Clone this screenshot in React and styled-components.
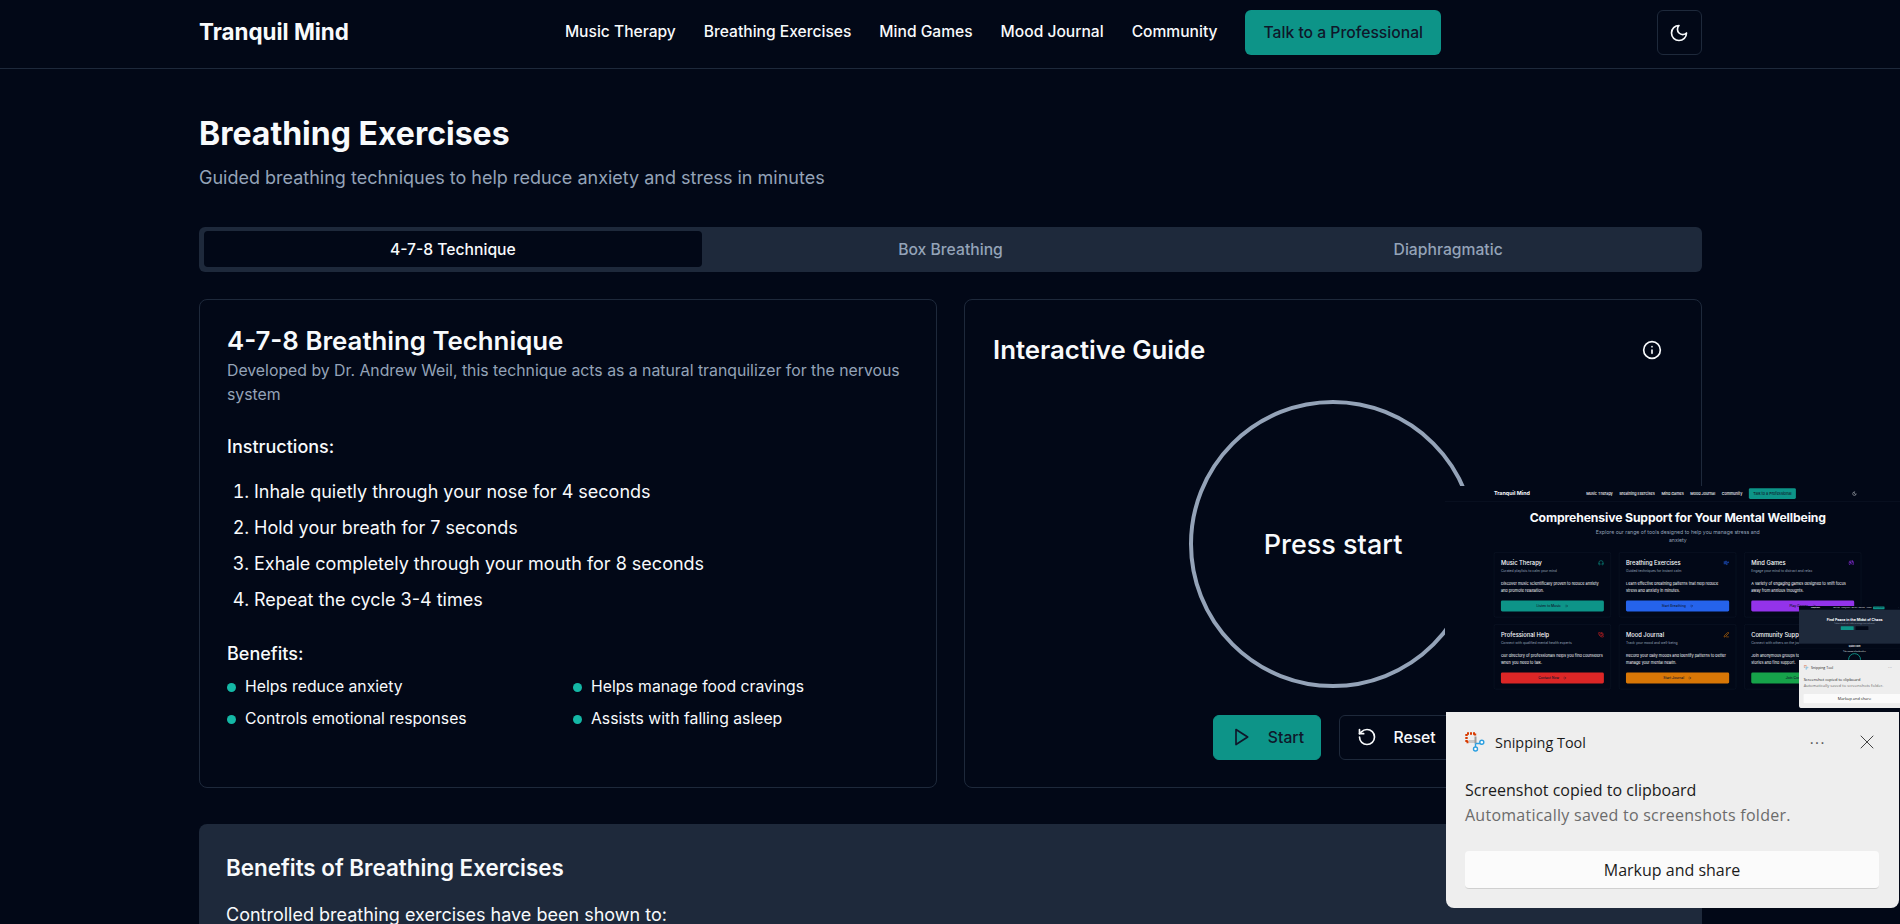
import React from "react";
import styled, { createGlobalStyle } from "styled-components";
import {
  ArrowRight,
  Gamepad2,
  Headphones,
  Info,
  PenLine,
  PhoneCall,
  RotateCcw,
  Users,
  Wind,
  X,
} from "lucide-react";

const GlobalStyle = createGlobalStyle`
  * { box-sizing: border-box; }
  html, body { margin: 0; padding: 0; height: 100%; overflow: hidden; background: #020817; }
  body { font-family: Inter, "Liberation Sans", sans-serif; color: #f8fafc; }
  h1, h2, h3, p, ol, ul { margin: 0; padding: 0; }
`;

const Screen = styled.div`
  position: relative;
  height: 924px;
  overflow: hidden;
  background: #020817;
`;

const Container = styled.div`
  width: 1503px;
  margin-left: 199px;
`;

const HeaderBar = styled.header`
  height: 69px;
  border-bottom: 1px solid #1e293b;
`;

const HeaderRow = styled(Container)`
  height: 68px;
  display: flex;
  align-items: center;
  justify-content: space-between;
  padding-bottom: 3px;
`;

const Logo = styled.div`
  padding-bottom: 2px;
  font-size: 22.4px;
  font-weight: 700;
  line-height: 32px;
`;

const Nav = styled.nav`
  display: flex;
  align-items: center;
  gap: 28px;
  font-size: 15.6px;
  font-weight: 500;
`;

const NavLink = styled.span`
  padding-bottom: 2px;
`;

const CtaButton = styled.button`
  height: 45px;
  padding: 0 18px;
  border: 0;
  border-radius: 6px;
  background: #0d9488;
  color: #0f172a;
  font: 500 15.7px Inter, sans-serif;
`;

const IconButton = styled.button`
  width: 45px;
  height: 45px;
  display: flex;
  align-items: center;
  justify-content: center;
  border: 1px solid #1e293b;
  border-radius: 6px;
  background: #020817;
  color: #f8fafc;
`;

const PageTitle = styled.h1`
  padding-top: 45px;
  font-size: 32px;
  font-weight: 700;
  line-height: 40px;
`;

const PageSub = styled.p`
  margin-top: 10px;
  font-size: 18px;
  line-height: 28px;
  color: #94a3b8;
`;

const TabBar = styled.div`
  margin-top: 35px;
  height: 45px;
  padding: 4px 5px;
  display: grid;
  grid-template-columns: repeat(3, 1fr);
  border-radius: 6px;
  background: #1e293b;
`;

const Tab = styled.div`
  height: 36px;
  display: flex;
  align-items: center;
  justify-content: center;
  border-radius: 4px;
  font-size: 15.7px;
  font-weight: 500;
  background: ${(p) => (p.$active ? "#020817" : "transparent")};
  color: ${(p) => (p.$active ? "#f8fafc" : "#94a3b8")};
`;

const CardGrid = styled.div`
  margin-top: 27px;
  display: grid;
  grid-template-columns: 1fr 1fr;
  gap: 27px;
`;

const Card = styled.section`
  border: 1px solid #1e293b;
  border-radius: 8px;
`;

const TechniqueCard = styled(Card)`
  padding: 24px 27px 0;
`;

const CardTitle = styled.h2`
  font-size: 25.8px;
  font-weight: 600;
  line-height: 34px;
`;

const CardSub = styled.p`
  margin-top: 1px;
  font-size: 15.8px;
  line-height: 24px;
  color: #94a3b8;
`;

const Label = styled.h3`
  margin-top: ${(p) => p.$top}px;
  font-size: 18px;
  font-weight: 500;
  line-height: 28px;
`;

const Steps = styled.ol`
  margin-top: 17px;
  display: flex;
  flex-direction: column;
  gap: 8px;
  padding-left: 27px;
  font-size: 18px;
  line-height: 28px;
`;

const BenefitGrid = styled.ul`
  margin-top: 7px;
  display: grid;
  grid-template-columns: 1fr 1fr;
  gap: 8px 10px;
  list-style: none;
`;

const BenefitItem = styled.li`
  display: flex;
  align-items: center;
  gap: 9px;
  font-size: 15.75px;
  line-height: 24px;
  &::before {
    content: "";
    width: 9px;
    height: 9px;
    border-radius: 50%;
    background: #14b8a6;
  }
`;

const GuideCard = styled(Card)`
  padding: 33px 28px 27px;
  display: flex;
  flex-direction: column;
`;

const GuideHead = styled.div`
  display: flex;
  align-items: center;
  justify-content: space-between;
  padding-right: 11px;
`;

const BreathCircle = styled.div`
  align-self: center;
  margin-top: 33px;
  width: 288px;
  height: 288px;
  display: flex;
  align-items: center;
  justify-content: center;
  border: 4px solid #94a3b8;
  border-radius: 50%;
  font-size: 27px;
  font-weight: 500;
`;

const GuideActions = styled.div`
  margin-top: 27px;
  display: flex;
  justify-content: center;
  gap: 18px;
`;

const ActionButton = styled.button`
  height: 45px;
  padding: 0 16px 1px 17px;
  display: flex;
  align-items: center;
  gap: 16.5px;
  border: 1px solid ${(p) => (p.$primary ? "#0d9488" : "#1e293b")};
  border-radius: 6px;
  background: ${(p) => (p.$primary ? "#0d9488" : "#020817")};
  color: ${(p) => (p.$primary ? "#0f172a" : "#f8fafc")};
  font: 500 15.7px Inter, sans-serif;
`;

const InfoPanel = styled.section`
  margin-top: 36px;
  padding: 28px 27px 40px;
  border-radius: 8px;
  background: #1e293b;
`;

const InfoTitle = styled.h2`
  font-size: 22.4px;
  font-weight: 600;
  line-height: 32px;
`;

const InfoText = styled.p`
  margin-top: 17px;
  font-size: 18px;
  line-height: 28px;
`;

/* screenshot previews that windows leaves stacked in the corner */
const PreviewFrame = styled.div`
  position: absolute;
  left: 1445px;
  top: 486px;
  width: 456px;
  height: 226px;
  overflow: hidden;
  background: #020817;
`;

const Scaled = styled.div`
  width: 1900px;
  transform: scale(${(p) => p.$scale});
  transform-origin: top left;
`;

const HomeNav = styled.div`
  height: 64px;
  padding: 0 184px 0 204px;
  display: flex;
  align-items: center;
  justify-content: space-between;
  border-bottom: 1px solid #1e293b;
`;

const HomeLinks = styled.div`
  display: flex;
  align-items: center;
  gap: 27.5px;
  font-size: 15.6px;
  font-weight: 500;
`;

const HomeHero = styled.div`
  padding: 36px 0 0 40px;
  text-align: center;
`;

const HomeTitle = styled.h1`
  font-size: 50.8px;
  font-weight: 700;
  line-height: 60px;
  letter-spacing: -0.5px;
`;

const HomeSub = styled.p`
  width: 740px;
  margin: 18px auto 0;
  font-size: 21.6px;
  line-height: 33px;
  color: #94a3b8;
`;

const HomeGrid = styled.div`
  width: 1530px;
  margin: 32px 0 0 204px;
  display: grid;
  grid-template-columns: repeat(3, 1fr);
  gap: 29px 34px;
`;

const HomeCard = styled.div`
  height: 271px;
  padding: 27px 28px 0;
  border: 1px solid #1e293b;
  border-radius: 8px;
`;

const HomeCardHead = styled.div`
  display: flex;
  align-items: center;
  justify-content: space-between;
  font-size: 24px;
  font-weight: 500;
  line-height: 32px;
  color: #f8fafc;
  svg { color: ${(p) => p.$color}; }
`;

const HomeCardSub = styled.p`
  margin-top: 6px;
  font-size: 14px;
  line-height: 20px;
  color: #94a3b8;
`;

const HomeCardText = styled.p`
  margin-top: 33px;
  font-size: 16px;
  line-height: 27px;
`;

const HomeCardButton = styled.div`
  margin-top: 28px;
  height: 46px;
  display: flex;
  align-items: center;
  justify-content: center;
  gap: 16px;
  border-radius: 6px;
  background: ${(p) => p.$color};
  color: #0f172a;
  font-size: 14px;
  font-weight: 500;
`;

const MiniFrame = styled.div`
  position: absolute;
  left: 1799px;
  top: 606px;
  width: 101px;
  height: 54px;
  overflow: hidden;
  background: #020817;
`;

const MiniHero = styled.div`
  height: 580px;
  padding-top: 130px;
  display: flex;
  flex-direction: column;
  align-items: center;
  background: #1e293b;
  h1 {
    font-size: 60px;
    font-weight: 700;
    line-height: 70px;
  }
  p {
    margin-top: 20px;
    font-size: 24px;
    line-height: 34px;
    color: #94a3b8;
  }
`;

const MiniActions = styled.div`
  margin-top: 30px;
  display: flex;
  gap: 32px;
`;

const MiniButton = styled.div`
  width: 220px;
  height: 64px;
  border-radius: 6px;
  background: ${(p) => p.$color};
`;

const MiniSection = styled.div`
  padding-top: 24px;
  text-align: center;
  h2 {
    padding-bottom: 16px;
    border-bottom: 2px solid #1e293b;
    font-size: 36px;
    font-weight: 600;
  }
  p {
    margin-top: 24px;
    font-size: 24px;
    line-height: 36px;
  }
`;

const MiniRing = styled.div`
  width: 220px;
  height: 220px;
  margin: 16px auto 0;
  border: 16px solid #0d9488;
  border-radius: 50%;
`;

const ToastFrame = styled.div`
  position: absolute;
  left: ${(p) => p.$left}px;
  top: ${(p) => p.$top}px;
  width: ${(p) => p.$width}px;
  height: ${(p) => p.$height}px;
  overflow: hidden;
`;

const ToastScale = styled.div`
  width: 453px;
  transform: scale(${(p) => p.$scale});
  transform-origin: top left;
`;

const ToastBox = styled.div`
  width: 453px;
  height: 196px;
  padding: 20px 20px 0 19px;
  border-radius: 0 0 8px 8px;
  background: #eeeeee;
  font-family: "Open Sans", "Noto Sans", sans-serif;
  color: #1b1b1b;
`;

const ToastHead = styled.div`
  height: 20px;
  margin-bottom: 26px;
  display: flex;
  align-items: center;
  gap: 10px;
  font-size: 14.4px;
  svg { flex: none; }
`;

const ToastDots = styled.span`
  margin-left: auto;
  margin-right: 19px;
  font-size: 15px;
  letter-spacing: 1.5px;
  line-height: 20px;
  color: #555;
`;

const ToastText = styled.p`
  margin-top: ${(p) => (p.$muted ? 1 : 0)}px;
  font-size: 16px;
  line-height: 24px;
  letter-spacing: ${(p) => (p.$muted ? 0.25 : 0)}px;
  color: ${(p) => (p.$muted ? "#6b6b6b" : "#1b1b1b")};
`;

const ToastButton = styled.div`
  margin-top: 24px;
  height: 38px;
  padding-top: 1px;
  display: flex;
  align-items: center;
  justify-content: center;
  border-radius: 4px;
  border-bottom: 1px solid #d0d0d0;
  background: #fbfbfb;
  font-size: 16px;
`;

const steps = [
  "Inhale quietly through your nose for 4 seconds",
  "Hold your breath for 7 seconds",
  "Exhale completely through your mouth for 8 seconds",
  "Repeat the cycle 3-4 times",
];

const benefits = [
  "Helps reduce anxiety",
  "Helps manage food cravings",
  "Controls emotional responses",
  "Assists with falling asleep",
];

const navLinks = ["Music Therapy", "Breathing Exercises", "Mind Games", "Mood Journal", "Community"];

const homeCards = [
  { title: "Music Therapy", icon: Headphones, color: "#0d9488", sub: "Curated playlists to calm your mind", text: "Discover music scientifically proven to reduce anxiety and promote relaxation.", action: "Listen to Music" },
  { title: "Breathing Exercises", icon: Wind, color: "#2563eb", sub: "Guided techniques for instant calm", text: "Learn effective breathing patterns that help reduce stress and anxiety in minutes.", action: "Start Breathing" },
  { title: "Mind Games", icon: Gamepad2, color: "#9333ea", sub: "Engage your mind to distract and relax", text: "A variety of engaging games designed to shift focus away from anxious thoughts.", action: "Play Games" },
  { title: "Professional Help", icon: PhoneCall, color: "#dc2626", sub: "Connect with qualified mental health experts", text: "Our directory of professionals helps you find counselors when you need to talk.", action: "Contact Now" },
  { title: "Mood Journal", icon: PenLine, color: "#d97706", sub: "Track your mood and well-being", text: "Record your daily moods and identify patterns to better manage your mental health.", action: "Start Journal" },
  { title: "Community Support", icon: Users, color: "#16a34a", sub: "Connect with others on the journey", text: "Join anonymous groups to share experiences and stories and find support.", action: "Join Community" },
];

const MoonIcon = ({ size = 20 }) => (
  <svg width={size} height={size} viewBox="0 0 24 24" fill="none" stroke="currentColor" strokeWidth="2" strokeLinecap="round" strokeLinejoin="round">
    <path d="M12 3a6 6 0 0 0 9 9 9 9 0 1 1-9-9Z" />
  </svg>
);

const PlayIcon = () => (
  <svg width="20" height="20" viewBox="0 0 24 24" fill="none" stroke="currentColor" strokeWidth="2" strokeLinecap="round" strokeLinejoin="round">
    <polygon points="6 3 20 12 6 21 6 3" />
  </svg>
);

const SnipIcon = () => (
  <svg width="20" height="20" viewBox="0 0 20 20" fill="none">
    <path d="M1.5 10V1.5H10" stroke="#d83b01" strokeWidth="2.4" strokeDasharray="2 1" />
    <path d="M1.5 10h2M10 1.5v2" stroke="#d83b01" strokeWidth="2.4" />
    <path d="M4 8h6.5v3H4z" fill="#c8c8c8" />
    <path d="M10.5 4.5v7" stroke="#9a9a9a" strokeWidth="2" />
    <path d="M10.5 11.5l6 0M10.5 11.5l0 5" stroke="#2b9fe0" strokeWidth="1.4" />
    <circle cx="16.8" cy="10.3" r="2" fill="#fff" stroke="#2b9fe0" strokeWidth="1.4" />
    <circle cx="10.5" cy="17" r="2" fill="#fff" stroke="#2b9fe0" strokeWidth="1.4" />
  </svg>
);

const Toast = () => (
  <ToastBox>
    <ToastHead>
      <SnipIcon />
      Snipping Tool
      <ToastDots>···</ToastDots>
      <X size={24} strokeWidth={1} color="#444" />
    </ToastHead>
    <ToastText>Screenshot copied to clipboard</ToastText>
    <ToastText $muted>Automatically saved to screenshots folder.</ToastText>
    <ToastButton>Markup and share</ToastButton>
  </ToastBox>
);

const PreviewNav = () => (
  <HomeNav>
    <Logo>Tranquil Mind</Logo>
    <HomeLinks>
      {navLinks.map((l) => (
        <span key={l}>{l}</span>
      ))}
      <CtaButton>Talk to a Professional</CtaButton>
    </HomeLinks>
    <MoonIcon />
  </HomeNav>
);

const HomePreview = () => (
  <PreviewFrame>
    <Scaled $scale={0.24}>
      <PreviewNav />
      <HomeHero>
        <HomeTitle>Comprehensive Support for Your Mental Wellbeing</HomeTitle>
        <HomeSub>Explore our range of tools designed to help you manage stress and anxiety</HomeSub>
      </HomeHero>
      <HomeGrid>
        {homeCards.map((c) => (
          <HomeCard key={c.title}>
            <HomeCardHead $color={c.color}>
              {c.title}
              <c.icon size={24} strokeWidth={2.5} />
            </HomeCardHead>
            <HomeCardSub>{c.sub}</HomeCardSub>
            <HomeCardText>{c.text}</HomeCardText>
            <HomeCardButton $color={c.color}>
              {c.action}
              <ArrowRight size={16} />
            </HomeCardButton>
          </HomeCard>
        ))}
      </HomeGrid>
    </Scaled>
  </PreviewFrame>
);

const MiniPreview = () => (
  <MiniFrame>
    <Scaled $scale={0.0585}>
      <PreviewNav />
      <MiniHero>
        <h1>Find Peace in the Midst of Chaos</h1>
        <p>Evidence-based tools to help you manage stress and anxiety</p>
        <MiniActions>
          <MiniButton $color="#0d9488" />
          <MiniButton $color="#020817" />
        </MiniActions>
      </MiniHero>
      <MiniSection>
        <h2>Quick Calm</h2>
        <p>Take a moment to breathe with us</p>
        <MiniRing />
      </MiniSection>
    </Scaled>
  </MiniFrame>
);

export default function App() {
  return (
    <Screen>
      <GlobalStyle />
      <HeaderBar>
        <HeaderRow>
          <Logo>Tranquil Mind</Logo>
          <Nav>
            {navLinks.map((l) => (
              <NavLink key={l}>{l}</NavLink>
            ))}
            <CtaButton>Talk to a Professional</CtaButton>
          </Nav>
          <IconButton>
            <MoonIcon />
          </IconButton>
        </HeaderRow>
      </HeaderBar>
      <Container as="main">
        <PageTitle>Breathing Exercises</PageTitle>
        <PageSub>Guided breathing techniques to help reduce anxiety and stress in minutes</PageSub>
        <TabBar>
          <Tab $active>4-7-8 Technique</Tab>
          <Tab>Box Breathing</Tab>
          <Tab>Diaphragmatic</Tab>
        </TabBar>
        <CardGrid>
          <TechniqueCard>
            <CardTitle>4-7-8 Breathing Technique</CardTitle>
            <CardSub>Developed by Dr. Andrew Weil, this technique acts as a natural tranquilizer for the nervous system</CardSub>
            <Label $top={26}>Instructions:</Label>
            <Steps>
              {steps.map((s) => (
                <li key={s}>{s}</li>
              ))}
            </Steps>
            <Label $top={26}>Benefits:</Label>
            <BenefitGrid>
              {benefits.map((b) => (
                <BenefitItem key={b}>{b}</BenefitItem>
              ))}
            </BenefitGrid>
          </TechniqueCard>
          <GuideCard>
            <GuideHead>
              <CardTitle>Interactive Guide</CardTitle>
              <Info size={20} />
            </GuideHead>
            <BreathCircle>Press start</BreathCircle>
            <GuideActions>
              <ActionButton $primary>
                <PlayIcon />
                Start
              </ActionButton>
              <ActionButton>
                <RotateCcw size={20} />
                Reset
              </ActionButton>
            </GuideActions>
          </GuideCard>
        </CardGrid>
        <InfoPanel>
          <InfoTitle>Benefits of Breathing Exercises</InfoTitle>
          <InfoText>Controlled breathing exercises have been shown to:</InfoText>
        </InfoPanel>
      </Container>
      <HomePreview />
      <MiniPreview />
      <ToastFrame $left={1799} $top={660} $width={101} $height={48}>
        <ToastScale $scale={0.245}>
          <Toast />
        </ToastScale>
      </ToastFrame>
      <ToastFrame $left={1446} $top={712} $width={453} $height={196}>
        <ToastScale $scale={1}>
          <Toast />
        </ToastScale>
      </ToastFrame>
    </Screen>
  );
}
